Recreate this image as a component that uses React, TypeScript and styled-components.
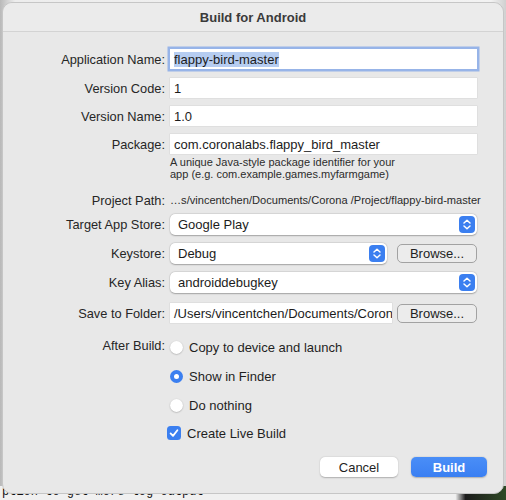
import React from 'react';
import styled, { createGlobalStyle } from 'styled-components';

const GlobalStyle = createGlobalStyle`
  html, body {
    margin: 0;
    padding: 0;
  }
  body {
    width: 506px;
    height: 500px;
    overflow: hidden;
    background: #d9d9d9;
    font-family: "Liberation Sans", Arial, sans-serif;
  }
`;

const Desktop = styled.div`
  width: 506px;
  height: 500px;
  overflow: hidden;
  background: linear-gradient(90deg, #b9b9b9 0, #ededed 3%, #f2f2f2 97%, #d0d0d0 100%);
`;

const Dialog = styled.div`
  position: relative;
  z-index: 1;
  margin: 2px 2px 0;
  height: 492px;
  box-sizing: border-box;
  background: #e8e8e8;
  border: 1px solid #c6c6c6;
  border-radius: 10px;
  display: flex;
  flex-direction: column;
`;

const TitleBar = styled.div`
  height: 28px;
  display: flex;
  align-items: center;
  justify-content: center;
  font-size: 13px;
  font-weight: bold;
  color: #3a3a3a;
  background: #ebebeb;
  border-bottom: 1px solid #d3d3d3;
  border-radius: 10px 10px 0 0;
`;

const Form = styled.div`
  padding: 16px 0 0 7px;
  display: flex;
  flex-direction: column;
`;

const Row = styled.div<{ $gap: number }>`
  display: grid;
  grid-template-columns: 155px 308px;
  column-gap: 5px;
  align-items: center;
  min-height: 22px;
  margin-top: ${(p) => p.$gap}px;
`;

const Label = styled.div<{ $lift?: number }>`
  text-align: right;
  font-size: 12.8px;
  color: #262626;
  white-space: nowrap;
  transform: translateY(${(p) => -(p.$lift || 0)}px);
`;

const TextField = styled.div<{ $width?: number; $focus?: boolean }>`
  width: ${(p) => p.$width || 307}px;
  height: 20px;
  box-sizing: border-box;
  padding: 0 4px;
  display: flex;
  align-items: center;
  background: #ffffff;
  font-size: 13px;
  color: #1c1c1c;
  white-space: nowrap;
  overflow: hidden;
  box-shadow: ${(p) =>
    p.$focus ? '0 0 0 2.5px #97b4e8' : '0 0 0 0.5px #d6d6d6'};
`;

const Selected = styled.span`
  background: #b6cdf1;
`;

const Hint = styled.div`
  grid-column: 2;
  font-size: 11px;
  line-height: 12px;
  color: #2c2c2c;
`;

const PathText = styled.div`
  font-size: 11.1px;
  color: #2a2a2a;
  white-space: nowrap;
`;

const Popup = styled.div<{ $width?: number }>`
  width: ${(p) => p.$width || 307}px;
  height: 21px;
  box-sizing: border-box;
  padding: 0 2px 0 8px;
  display: flex;
  align-items: center;
  justify-content: space-between;
  background: #ffffff;
  border-radius: 5px;
  font-size: 13px;
  color: #1c1c1c;
  box-shadow: 0 0.5px 1.5px rgba(0, 0, 0, 0.28), 0 0 0 0.5px rgba(0, 0, 0, 0.06);
`;

const FieldGroup = styled.div`
  width: 307px;
  display: flex;
  align-items: center;
  justify-content: space-between;
`;

const BrowseButton = styled.div`
  width: 80px;
  height: 19px;
  box-sizing: border-box;
  display: flex;
  align-items: center;
  justify-content: center;
  border: 1px solid #a2a2a2;
  border-radius: 5px;
  background: #ececec;
  font-size: 13px;
  color: #222;
`;

const Option = styled.div<{ $shift?: number }>`
  display: flex;
  align-items: center;
  gap: 6px;
  font-size: 13px;
  color: #1f1f1f;
  margin-left: ${(p) => p.$shift || 0}px;
`;

const Radio = styled.div<{ $on?: boolean }>`
  width: 13px;
  height: 13px;
  border-radius: 50%;
  box-sizing: border-box;
  display: flex;
  align-items: center;
  justify-content: center;
  background: ${(p) => (p.$on ? '#3b7ff0' : '#ffffff')};
  box-shadow: ${(p) =>
    p.$on ? 'none' : '0 0.5px 1.5px rgba(0, 0, 0, 0.3)'};
  &::after {
    content: '';
    display: ${(p) => (p.$on ? 'block' : 'none')};
    width: 5px;
    height: 5px;
    border-radius: 50%;
    background: #fff;
  }
`;

const Footer = styled.div`
  display: flex;
  justify-content: flex-end;
  gap: 13px;
  padding-right: 16px;
  margin-top: 13px;
`;

const DialogButton = styled.div<{ $primary?: boolean; $width: number }>`
  width: ${(p) => p.$width}px;
  height: 20px;
  display: flex;
  align-items: center;
  justify-content: center;
  border-radius: 5px;
  font-size: 13px;
  font-weight: ${(p) => (p.$primary ? 600 : 400)};
  color: ${(p) => (p.$primary ? '#ffffff' : '#1f1f1f')};
  background: ${(p) =>
    p.$primary ? 'linear-gradient(#4a8ef7, #3a7ff2)' : '#ffffff'};
  box-shadow: 0 0.5px 1.5px rgba(0, 0, 0, 0.25);
`;

const Terminal = styled.div`
  margin-top: -8px;
  padding-left: 2px;
  height: 20px;
  font-family: "Liberation Mono", "DejaVu Sans Mono", monospace;
  font-size: 12px;
  line-height: 13px;
  color: #111;
  white-space: nowrap;
  background: linear-gradient(90deg, #f0f0f0 0, #f0f0f0 90%, #1c1c1c 92%, #2f4a26 100%);
`;

function Stepper() {
  return (
    <svg width="16" height="17" viewBox="0 0 16 17">
      <rect x="0" y="0" width="16" height="17" rx="4" fill="#3b7ff0" />
      <path
        d="M5 7 L8 4.3 L11 7 M5 10 L8 12.7 L11 10"
        fill="none"
        stroke="#fff"
        strokeWidth="1.5"
        strokeLinecap="round"
        strokeLinejoin="round"
      />
    </svg>
  );
}

function CheckBox() {
  return (
    <svg width="14" height="14" viewBox="0 0 14 14">
      <rect x="0" y="0" width="14" height="14" rx="3.5" fill="#3b7ff0" />
      <path
        d="M3.6 7.4 L6 9.9 L10.4 4.3"
        fill="none"
        stroke="#fff"
        strokeWidth="1.8"
        strokeLinecap="round"
        strokeLinejoin="round"
      />
    </svg>
  );
}

export default function App() {
  return (
    <Desktop>
      <GlobalStyle />
      <Dialog>
        <TitleBar>Build for Android</TitleBar>
        <Form>
          <Row $gap={0}>
            <Label>Application Name:</Label>
            <TextField $focus>
              <Selected>flappy-bird-master</Selected>
            </TextField>
          </Row>
          <Row $gap={7}>
            <Label>Version Code:</Label>
            <TextField>1</TextField>
          </Row>
          <Row $gap={6}>
            <Label>Version Name:</Label>
            <TextField>1.0</TextField>
          </Row>
          <Row $gap={6}>
            <Label>Package:</Label>
            <TextField>com.coronalabs.flappy_bird_master</TextField>
          </Row>
          <Row $gap={1}>
            <Hint>
              A unique Java-style package identifier for your
              <br />
              app (e.g. com.example.games.myfarmgame)
            </Hint>
          </Row>
          <Row $gap={9}>
            <Label>Project Path:</Label>
            <PathText>…s/vincentchen/Documents/Corona /Project/flappy-bird-master</PathText>
          </Row>
          <Row $gap={2}>
            <Label>Target App Store:</Label>
            <Popup>
              Google Play
              <Stepper />
            </Popup>
          </Row>
          <Row $gap={7}>
            <Label>Keystore:</Label>
            <FieldGroup>
              <Popup $width={217}>
                Debug
                <Stepper />
              </Popup>
              <BrowseButton>Browse...</BrowseButton>
            </FieldGroup>
          </Row>
          <Row $gap={7}>
            <Label>Key Alias:</Label>
            <Popup>
              androiddebugkey
              <Stepper />
            </Popup>
          </Row>
          <Row $gap={9}>
            <Label>Save to Folder:</Label>
            <FieldGroup>
              <TextField $width={222}>/Users/vincentchen/Documents/Coron</TextField>
              <BrowseButton>Browse...</BrowseButton>
            </FieldGroup>
          </Row>
          <Row $gap={12}>
            <Label $lift={2}>After Build:</Label>
            <Option>
              <Radio />
              Copy to device and launch
            </Option>
          </Row>
          <Row $gap={7}>
            <div />
            <Option>
              <Radio $on />
              Show in Finder
            </Option>
          </Row>
          <Row $gap={7}>
            <div />
            <Option>
              <Radio />
              Do nothing
            </Option>
          </Row>
          <Row $gap={6}>
            <div />
            <Option $shift={-3}>
              <CheckBox />
              Create Live Build
            </Option>
          </Row>
        </Form>
        <Footer>
          <DialogButton $width={78}>Cancel</DialogButton>
          <DialogButton $width={76} $primary>
            Build
          </DialogButton>
        </Footer>
      </Dialog>
      <Terminal>ption to get more log output</Terminal>
    </Desktop>
  );
}
